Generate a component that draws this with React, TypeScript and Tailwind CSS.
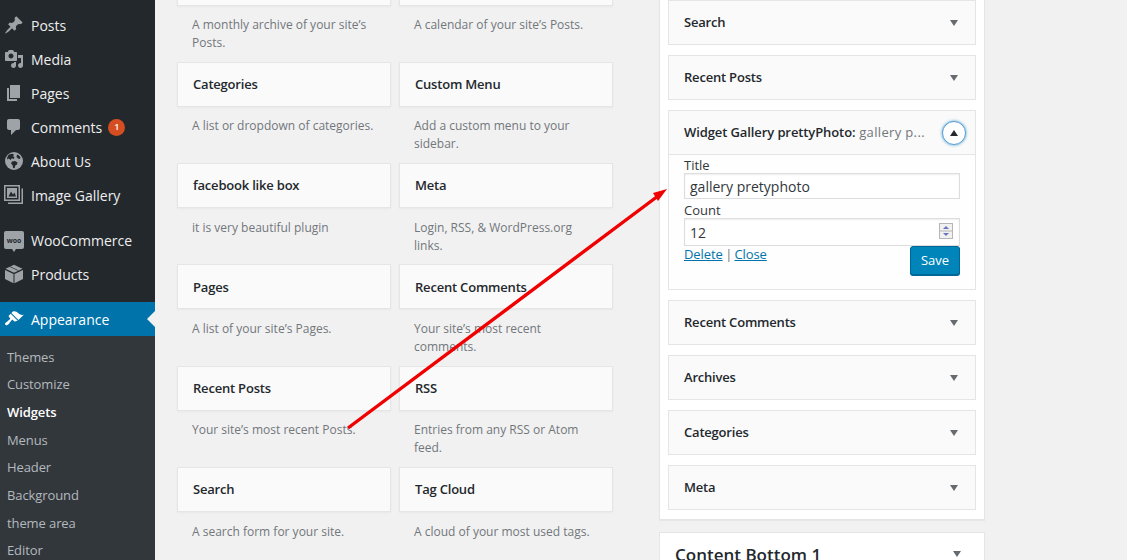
import React from "react";

const Ic = ({ d, className = "" }: { d: string; className?: string }) => (
  <svg viewBox="0 0 20 20" className={`w-5 h-5 fill-current ${className}`}><path d={d} /></svg>
);
const PIN = "M10.44 3.02l1.82-1.82 6.36 6.35-1.83 1.82c-1.05-.68-2.48-.57-3.41.36l-.75.75c-.92.93-1.04 2.35-.35 3.41l-1.83 1.82-2.41-2.41-2.8 2.79c-.42.42-3.38 2.71-3.8 2.29s1.86-3.39 2.28-3.81l2.79-2.79L4.1 9.36l1.83-1.82c1.05.69 2.48.57 3.4-.36l.75-.75c.93-.92 1.05-2.35.36-3.41z";
const MEDIA = "M13 11V4c0-.55-.45-1-1-1h-1.67L9 1H5L3.67 3H2c-.55 0-1 .45-1 1v7c0 .55.45 1 1 1h10c.55 0 1-.45 1-1zM7 4.5c1.38 0 2.5 1.12 2.5 2.5S8.38 9.5 7 9.5 4.5 8.38 4.5 7 5.62 4.5 7 4.5zM14 6h5v10.5c0 1.38-1.12 2.5-2.5 2.5S14 17.88 14 16.5s1.12-2.5 2.5-2.5c.17 0 .34.02.5.05V9h-3V6zm-4 8.05V13h2v3.5c0 1.38-1.12 2.5-2.5 2.5S7 17.88 7 16.5 8.12 14 9.5 14c.17 0 .34.02.5.05z";
const PAGES = "M6 15V2h10v13H6zm-1 1h8v2H3V5h2v11z";
const COMMENT = "M5 2h9c1.1 0 2 .9 2 2v7c0 1.1-.9 2-2 2h-2l-5 5v-5H5c-1.1 0-2-.9-2-2V4c0-1.1.9-2 2-2z";
const BRUSH = "M14.48 11.06L7.41 3.99l1.5-1.5c.5-.56 2.3-.47 3.51.32 1.21.8 1.43 1.28 2.91 2.1 1.18.64 2.45 1.26 4.45.85zm-.71.71L6.7 4.7 4.93 6.47c-.39.39-.39 1.02 0 1.41l1.06 1.06c.39.39.39 1.03 0 1.42-.6.6-1.43 1.11-2.21 1.69-.35.26-.7.53-1.01.84C1.43 13.23.4 14.75 1.4 15.75s2.52-.03 3.77-1.37c.31-.31.58-.66.84-1.01.58-.78 1.09-1.61 1.69-2.21.39-.39 1.02-.39 1.41 0l1.06 1.06c.39.39 1.02.39 1.41 0z";

const Globe = () => (
  <svg viewBox="0 0 20 20" className="w-5 h-5">
    <circle cx="10" cy="10" r="9" className="fill-current" />
    <path fill="#23282d" d="M5 3.5l3.5-.8 1.5 1-1 1.6 1.5 1-.8 1.6-2-.6-1 1.6L4.500 7.500 3 8.500C3 6.500 3.800 4.800 5 3.500zM8 10.500l3-.5 2.500 1.500-.5 2-1.700 1-.6 2.800-1.500-.3-.7-3-1.500-1.500zM13 3.500l2 1 1.500 2-.5 1.500-2-.5-1.500-1.500z" />
  </svg>
);
const Gallery = () => (
  <svg viewBox="0 0 20 20" className="w-5 h-5 fill-current">
    <path fillRule="evenodd" d="M0 0h16v16H0zM1.500 1.500v13h13v-13z" />
    <path d="M3 3h10v10H3zM4.500 11.500L7 6.500l2 3 1.500-2 1.500 4z" fillRule="evenodd" />
    <path d="M17.500 3.500H19V19H4v-1.500h13.500z" />
  </svg>
);
const Box = () => (
  <svg viewBox="0 0 20 20" className="w-5 h-5 fill-current">
    <path d="M10 .8l8.500 4L10 8.800 1.500 4.800zM1 6l8.500 4v9.200L1 15zM19 6v9l-8.500 4.200V10z" />
    <path fill="#23282d" d="M5.500 2.800l8.500 4 .9-.4-8.500-4z" />
  </svg>
);
const Woo = () => (
  <div className="relative w-5 h-[18px] rounded-[2px] bg-[#9ea3a8] flex items-center justify-center">
    <span className="text-[7px] leading-none font-bold text-[#23282d]">woo</span>
    <span className="absolute -bottom-[3px] left-2 w-0 h-0 border-x-[2px] border-x-transparent border-t-[3px] border-t-[#9ea3a8]" />
  </div>
);

const Item = ({ icon, label, badge }: { icon: React.ReactNode; label: string; badge?: string }) => (
  <div className="h-[34px] shrink-0 flex items-center text-[#eeeeee] text-[14px]">
    <div className="w-[31px] pl-1 shrink-0 text-[#9ea3a8]">{icon}</div>
    <span>{label}</span>
    {badge && (
      <span className="ml-[6px] w-[17px] h-[17px] rounded-full bg-[#d54e21] text-white text-[9px] font-semibold flex items-center justify-center">{badge}</span>
    )}
  </div>
);

const subs = ["Themes", "Customize", "Widgets", "Menus", "Header", "Background", "theme area", "Editor"];

const Sidebar = () => (
  <aside className="w-[155px] shrink-0 h-[560px] bg-[#23282d] pt-2 flex flex-col overflow-hidden">
    <Item icon={<Ic d={PIN} />} label="Posts" />
    <Item icon={<Ic d={MEDIA} />} label="Media" />
    <Item icon={<Ic d={PAGES} />} label="Pages" />
    <Item icon={<Ic d={COMMENT} />} label="Comments" badge="1" />
    <Item icon={<Globe />} label="About Us" />
    <Item icon={<Gallery />} label="Image Gallery" />
    <div className="h-[11px] shrink-0" />
    <Item icon={<Woo />} label="WooCommerce" />
    <Item icon={<Box />} label="Products" />
    <div className="h-[11px] shrink-0" />
    <div className="relative h-[34px] shrink-0 bg-[#0073aa] flex items-center text-white text-[14px]">
      <div className="w-[31px] pl-1 shrink-0"><Ic d={BRUSH} /></div>
      <span>Appearance</span>
      <span className="absolute right-0 top-[9px] w-0 h-0 border-y-[8px] border-y-transparent border-r-[8px] border-r-[#f1f1f1]" />
    </div>
    <div className="flex-1 bg-[#32373c] pt-[7.6px]">
      {subs.map((s) => (
        <div key={s} className={`h-[27.67px] flex items-center pl-[7px] text-[13px] tracking-[-0.1px] ${s === "Widgets" ? "text-white font-semibold" : "text-[#b4b9be]"}`}>{s}</div>
      ))}
    </div>
  </aside>
);

const widgets: [string, string, string, string][] = [
  ["Archives", "A monthly archive of your site’s Posts.", "Calendar", "A calendar of your site’s Posts."],
  ["Categories", "A list or dropdown of categories.", "Custom Menu", "Add a custom menu to your sidebar."],
  ["facebook like box", "it is very beautiful plugin", "Meta", "Login, RSS, & WordPress.org links."],
  ["Pages", "A list of your site’s Pages.", "Recent Comments", "Your site’s most recent comments."],
  ["Recent Posts", "Your site’s most recent Posts.", "RSS", "Entries from any RSS or Atom feed."],
  ["Search", "A search form for your site.", "Tag Cloud", "A cloud of your most used tags."],
];

const Avail = ({ title, desc }: { title: string; desc: string }) => (
  <div className="w-[214px] h-[101.33px]">
    <div className="h-[45px] bg-[#fafafa] border border-[#e5e5e5] shadow-[0_1px_2px_rgba(0,0,0,0.04)] flex items-center pl-[15px] pt-[1px] text-[13px] tracking-[-0.2px] font-semibold text-[#23282d]">{title}</div>
    <p className="mt-[10.5px] px-[15px] text-[12px] leading-[18px] text-[#72777c]">{desc}</p>
  </div>
);

const Arrow = ({ up }: { up?: boolean }) => (
  <span className={`w-0 h-0 border-x-[4px] border-x-transparent ${up ? "border-b-[6px] border-b-[#23282d]" : "border-t-[6px] border-t-[#666b70]"}`} />
);

const Closed = ({ title }: { title: string }) => (
  <div className="h-[45px] shrink-0 bg-[#fafafa] border border-[#e5e5e5] flex items-center justify-between pl-[15px] pr-[17px] text-[13px] tracking-[-0.2px] font-semibold text-[#23282d]">
    <span>{title}</span><Arrow />
  </div>
);

const Open = () => (
  <div className="h-[180px] shrink-0 bg-[#fefefe] border border-[#e5e5e5] text-[#32373c]">
    <div className="h-[44px] bg-[#fafafa] border-b border-[#e5e5e5] flex items-center justify-between pl-[15px] pr-[9px] text-[13px]">
      <span className="font-semibold text-[#23282d] tracking-[-0.1px]">Widget Gallery prettyPhoto:<span className="font-normal text-[#72777c] tracking-[0.35px]"> gallery p...</span></span>
      <span className="w-6 h-6 rounded-full border border-[#5b9dd9] bg-white shadow-[0_0_3px_rgba(30,140,190,0.8)] flex items-center justify-center"><Arrow up /></span>
    </div>
    <div className="px-[15px] text-[13px]">
      <div className="h-[18px] leading-[20px]">Title</div>
      <div className="h-[26px] border border-[#dddddd] bg-white shadow-[inset_0_1px_2px_rgba(0,0,0,0.07)] flex items-center px-[5px] text-[14px]">gallery pretyphoto</div>
      <div className="h-[19px] leading-[22px]">Count</div>
      <div className="relative h-[28px] border border-[#dddddd] bg-white shadow-[inset_0_1px_2px_rgba(0,0,0,0.07)] flex items-center px-[5px] text-[14px]">
        12
        <svg viewBox="0 0 14 16" className="absolute right-[6px] top-[4px] w-[14px] h-[16px]">
          <rect x="0.500" y="0.500" width="13" height="15" fill="#f1f1f1" stroke="#b5b5b5" />
          <path d="M0 8h14" stroke="#b5b5b5" />
          <path d="M7 3l3 3H4z" fill="#6b74c0" />
          <path d="M7 13l3-3H4z" fill="#6b74c0" />
        </svg>
      </div>
      <div className="flex items-start justify-between">
        <div className="-mt-[1px] leading-[18px] tracking-[-0.1px]">
          <span className="text-[#0073aa] underline">Delete</span><span className="text-[#72777c] tracking-[-0.7px]"> | </span><span className="text-[#0073aa] underline">Close</span>
        </div>
        <button className="w-[50px] h-[29px] rounded-[3px] bg-[#0085ba] border border-[#006799] text-white text-[13px] shadow-[0_1px_0_#006799]">Save</button>
      </div>
    </div>
  </div>
);

export default function App() {
  return (
    <div className="relative w-[1127px] h-[560px] overflow-hidden bg-[#f1f1f1] flex" style={{ fontFamily: '"Open Sans", sans-serif' }}>
      <Sidebar />
      <main className="ml-[22px] w-[436px] shrink-0 -mt-[39.5px] grid grid-cols-[214px_214px] gap-x-2 content-start">
        {widgets.flatMap(([a, b, c, d]) => [
          <Avail key={a} title={a} desc={b} />,
          <Avail key={c} title={c} desc={d} />,
        ])}
      </main>
      <section className="ml-[46px] w-[326px] shrink-0 flex flex-col">
        <div className="h-[520px] shrink-0 bg-white border-x border-b border-[#e5e5e5] shadow-[0_1px_1px_rgba(0,0,0,0.04)] pl-[8px] pr-[8px] flex flex-col gap-[10px]">
          <Closed title="Search" />
          <Closed title="Recent Posts" />
          <Open />
          <Closed title="Recent Comments" />
          <Closed title="Archives" />
          <Closed title="Categories" />
          <Closed title="Meta" />
        </div>
        <div className="mt-[12px] h-[40px] bg-white border border-[#e5e5e5] flex items-start justify-between pl-[15px] pr-[23px] pt-[10px]">
          <span className="text-[17px] font-semibold leading-[24px] text-[#23282d]">Content Bottom 1</span>
          <span className="mt-[8px] flex"><Arrow /></span>
        </div>
      </section>
      <svg className="absolute left-0 top-0 w-[1127px] h-[560px] pointer-events-none" viewBox="0 0 1127 560">
        <line x1="348" y1="428" x2="658" y2="196" stroke="#f00000" strokeWidth="3.4" />
        <path d="M667 189l-14 4 5 8z" fill="#f00000" />
      </svg>
    </div>
  );
}
